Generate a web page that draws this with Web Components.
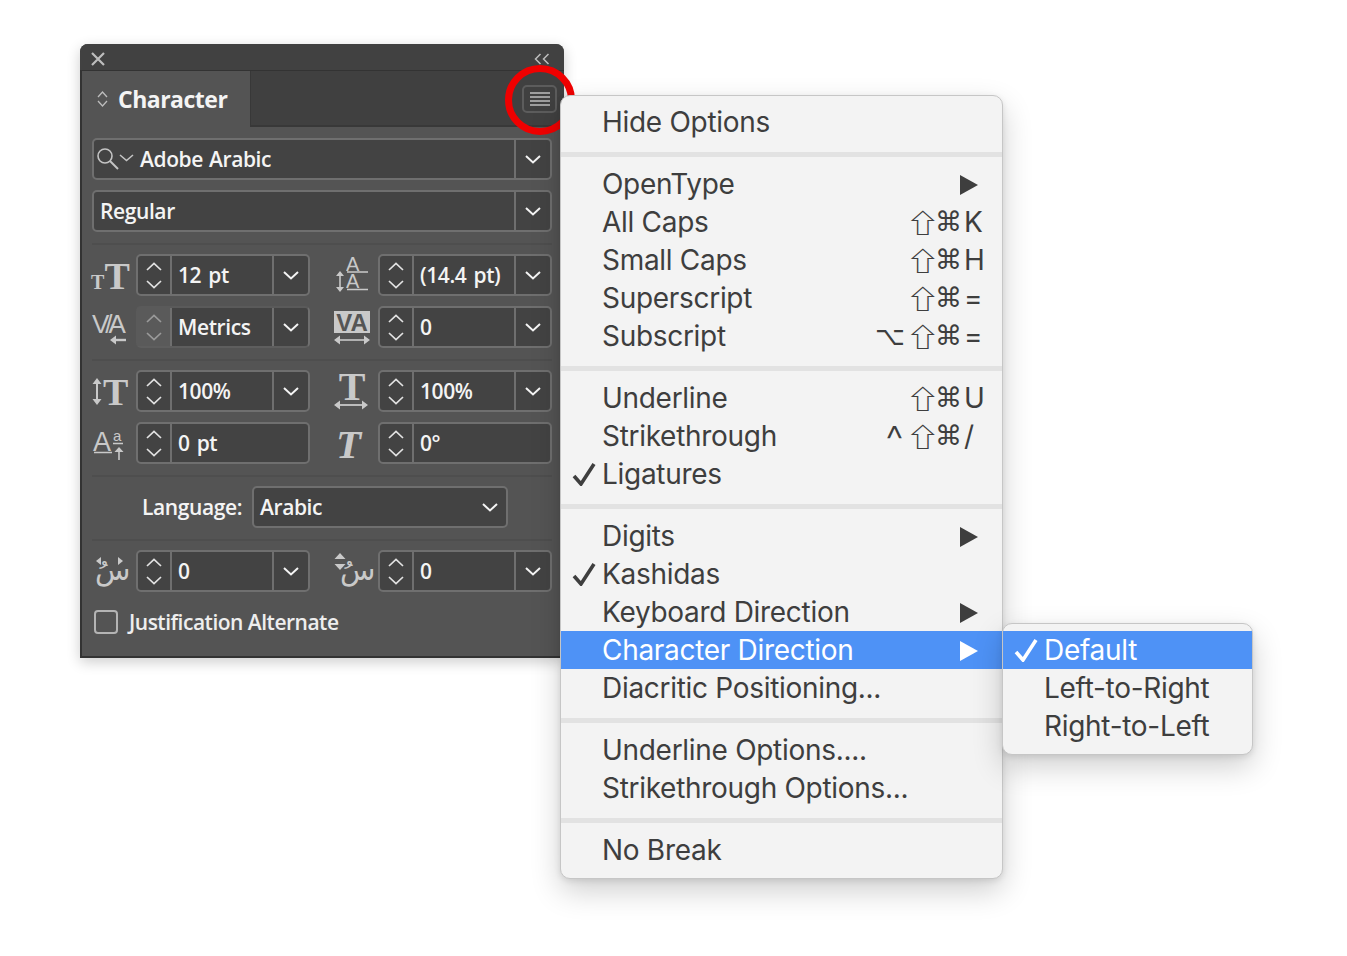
<!DOCTYPE html>
<html lang="en">
<head>
<meta charset="utf-8">
<title>Character panel</title>
<style>
  html, body { margin: 0; height: 956px; overflow: hidden; background: #fff; }
</style>
</head>
<body>
<app-canvas>
  <character-panel></character-panel>
  <mark-ring></mark-ring>
  <menu-list style="left:560px;top:95px;width:443px">
    <menu-row label="Hide Options"></menu-row>
    <menu-sep></menu-sep>
    <menu-row label="OpenType" arrow></menu-row>
    <menu-row label="All Caps" keys="⇧ ⌘ K"></menu-row>
    <menu-row label="Small Caps" keys="⇧ ⌘ H"></menu-row>
    <menu-row label="Superscript" keys="⇧ ⌘ ="></menu-row>
    <menu-row label="Subscript" keys="⌥ ⇧ ⌘ ="></menu-row>
    <menu-sep></menu-sep>
    <menu-row label="Underline" keys="⇧ ⌘ U"></menu-row>
    <menu-row label="Strikethrough" keys="^ ⇧ ⌘ /"></menu-row>
    <menu-row label="Ligatures" checked></menu-row>
    <menu-sep></menu-sep>
    <menu-row label="Digits" arrow></menu-row>
    <menu-row label="Kashidas" checked></menu-row>
    <menu-row label="Keyboard Direction" arrow></menu-row>
    <menu-row label="Character Direction" arrow active></menu-row>
    <menu-row label="Diacritic Positioning..."></menu-row>
    <menu-sep></menu-sep>
    <menu-row label="Underline Options...."></menu-row>
    <menu-row label="Strikethrough Options..."></menu-row>
    <menu-sep></menu-sep>
    <menu-row label="No Break"></menu-row>
  </menu-list>
  <menu-list style="left:1002px;top:623px;width:251px">
    <menu-row label="Default" checked active></menu-row>
    <menu-row label="Left-to-Right"></menu-row>
    <menu-row label="Right-to-Left"></menu-row>
  </menu-list>
</app-canvas>

<script>
const CHEVRON = (w, h, sw) => /* html */`
  <svg width="${w}" height="${h}" viewBox="0 0 ${w} ${h}" fill="none" stroke="currentColor" stroke-width="${sw}">
    <path d="M1 1 L${w / 2} ${h - 1.5} L${w - 1} 1"/>
  </svg>`;

const serif = `font-family="Liberation Serif" font-weight="700"`;
const sans = `font-family="Liberation Sans"`;
const arabic = `font-family="DejaVu Sans"`;

// every icon is drawn in a 44x42 box, the same box as the control row
const ICONS = {
  size: `<text y="35" ${serif}><tspan x="-1" font-size="20">T</tspan><tspan x="12.4" font-size="38">T</tspan></text>`,
  kern: `<text x="0" y="27" font-size="26" letter-spacing="-4" ${sans}>V/A</text>
    <path d="M34 34 H21" stroke="#c9c9c9" stroke-width="2.4"/><path d="M18 34 l6 -4.5 v9z"/>`,
  leading: `<foreignObject x="12" y="2" width="26" height="40">
      <div style="font:20px/17px 'Liberation Sans';color:#c9c9c9;white-space:pre">A&#10;A</div>
    </foreignObject>
    <path d="M13 18 H34 M13 35.5 H34 M6 21 V34" stroke="#c9c9c9" stroke-width="1.6" fill="none"/>
    <path d="M6 17 l-4 5 h8z M6 38 l-4 -5 h8z"/>`,
  track: `<rect x="0" y="5" width="36" height="22"/>
    <text x="18" y="25" font-size="24" text-anchor="middle" fill="#555" font-weight="700" ${sans}>VA</text>
    <path d="M4 34 H32" stroke="#c9c9c9" stroke-width="1.6"/><path d="M0 34 l6 -4.5 v9z M36 34 l-6 -4.5 v9z"/>`,
  vscale: `<text x="11" y="35" font-size="38" ${serif}>T</text>
    <path d="M5 12 V31" stroke="#c9c9c9" stroke-width="2"/><path d="M5 8 l-4.5 6 h9z M5 35 l-4.5 -6 h9z"/>`,
  hscale: `<text x="18" y="30" font-size="40" text-anchor="middle" ${serif}>T</text>
    <path d="M4 35 H30" stroke="#c9c9c9" stroke-width="1.8"/><path d="M0 35 l6 -4.5 v9z M34 35 l-6 -4.5 v9z"/>`,
  baseline: `<text ${sans}><tspan x="1" y="29" font-size="27">A</tspan><tspan x="21" y="19" font-size="15">a</tspan></text>
    <path d="M2 30.5 H20 M21 21.5 H31 M27 29 V38" stroke="#c9c9c9" stroke-width="1.6" fill="none"/>
    <path d="M27 25 l-4.5 5 h9z"/>`,
  skew: `<text x="2" y="36" font-size="41" font-style="italic" ${serif}>T</text>`,
  kashidaH: `<text x="3" y="30" font-size="29" ${arabic}>سُ</text>
    <path d="M4 11 l5 -4 v8z M31 11 l-5 -4 v8z"/>`,
  kashidaV: `<text x="6" y="30" font-size="29" ${arabic}>سُ</text>
    <path d="M6 3 l-5.5 6 h11z M6 20 l-5.5 -6 h11z"/>`,
};

class AppCanvas extends HTMLElement {
  constructor() {
    super();
    this.attachShadow({ mode: "open" });
    this.shadowRoot.innerHTML = /* html */`
      <style>
        :host { display: block; position: relative; width: 1347px; height: 956px; overflow: hidden; }
      </style>
      <slot></slot>`;
  }
}

class DropSelect extends HTMLElement {
  constructor() {
    super();
    this.attachShadow({ mode: "open" });
  }

  connectedCallback() {
    const search = this.hasAttribute("search");
    const plain = this.hasAttribute("plain");
    this.shadowRoot.innerHTML = /* html */`
      <style>
        :host {
          display: flex;
          box-sizing: border-box;
          height: 42px;
          background: #434343;
          border: 2px solid #6f6f6f;
          border-radius: 5px;
          color: #f4f4f4;
          font: 600 21px/38px "Open Sans", sans-serif;
          letter-spacing: -0.4px;
          word-spacing: 1px;
        }
        .search { display: flex; align-items: center; padding-left: 2px; color: #c4c4c4; }
        .text { flex: 1; padding-left: 6px; white-space: nowrap; }
        .drop {
          width: 36px;
          display: flex;
          align-items: center;
          justify-content: center;
          box-sizing: border-box;
          border-left: 2px solid #6f6f6f;
        }
        .plain { border-left: 0; width: 32px; }
      </style>
      ${search ? /* html */`<div class="search">
        <svg width="38" height="30" viewBox="0 0 38 30" fill="none" stroke="currentColor" stroke-width="1.6">
          <circle cx="9" cy="12" r="7"/><path d="M14 17 L22 25" stroke-width="2"/><path d="M24 11 L30.5 16.5 L37 11"/>
        </svg></div>` : ""}
      <div class="text">${this.getAttribute("value")}</div>
      <div class="drop ${plain ? "plain" : ""}">${CHEVRON(16, 9, 2)}</div>`;
  }
}

class SpinCombo extends HTMLElement {
  constructor() {
    super();
    this.attachShadow({ mode: "open" });
  }

  connectedCallback() {
    const noDrop = this.hasAttribute("nodrop");
    const off = this.hasAttribute("off");
    this.shadowRoot.innerHTML = /* html */`
      <style>
        :host {
          display: grid;
          grid-template-columns: 34px 1fr ${noDrop ? "" : "36px"};
          box-sizing: border-box;
          height: 42px;
          background: #434343;
          border: 2px solid #6f6f6f;
          border-radius: 5px;
          color: #f4f4f4;
          font: 600 21px/38px "Open Sans", sans-serif;
          letter-spacing: -0.4px;
          word-spacing: 2px;
        }
        :host([off]) { border-left-color: #5a5a5a; border-top-color: #5a5a5a; border-bottom-color: #5e5e5e; }
        .step {
          display: flex;
          flex-direction: column;
          align-items: center;
          justify-content: space-between;
          padding: 6px 0 5px;
          border-right: 2px solid #6f6f6f;
          color: #e2e2e2;
        }
        .step svg:first-child { transform: scaleY(-1); }
        .off { background: #5a5a5a; color: #9a9a9a; }
        .value { padding-left: 6px; white-space: nowrap; }
        .drop {
          display: flex;
          align-items: center;
          justify-content: center;
          border-left: 2px solid #6f6f6f;
        }
      </style>
      <div class="step ${off ? "off" : ""}">${CHEVRON(16, 9, 1.7)}${CHEVRON(16, 9, 1.7)}</div>
      <div class="value">${this.getAttribute("value")}</div>
      ${noDrop ? "" : `<div class="drop">${CHEVRON(16, 9, 2)}</div>`}`;
  }
}

class FieldIcon extends HTMLElement {
  constructor() {
    super();
    this.attachShadow({ mode: "open" });
  }

  connectedCallback() {
    this.shadowRoot.innerHTML = /* html */`
      <style>
        :host { display: block; width: 44px; height: 42px; }
        svg { display: block; overflow: visible; fill: #c9c9c9; }
      </style>
      <svg width="44" height="42" viewBox="0 0 44 42">${ICONS[this.getAttribute("name")]}</svg>`;
  }
}

class CharacterPanel extends HTMLElement {
  constructor() {
    super();
    this.attachShadow({ mode: "open" });
  }

  static get styles() {
    return /* css */`
      :host {
        position: absolute;
        left: 80px;
        top: 44px;
        width: 484px;
        height: 614px;
        display: flex;
        flex-direction: column;
        box-sizing: border-box;
        border-radius: 8px 8px 0 0;
        border: solid #333;
        border-width: 0 0 2px 2px;
        background: #545454;
        font-family: "Open Sans", sans-serif;
        color: #f4f4f4;
        box-shadow: 0 4px 14px #0003;
      }

      .title {
        height: 27px;
        flex: none;
        box-sizing: border-box;
        margin-left: -2px;
        display: flex;
        align-items: center;
        justify-content: space-between;
        padding: 4px 14px 0 11px;
        background: #414141;
        border-radius: 8px 8px 0 0;
        border-bottom: 1px solid #333;
        color: #bdbdbd;
      }

      .tabs {
        height: 54px;
        flex: none;
        display: flex;
        background: #404040;
        border-bottom: 2px solid #383838;
      }

      .tab {
        width: 169px;
        margin-bottom: -2px;
        display: flex;
        align-items: center;
        gap: 10px;
        padding-left: 15px;
        box-sizing: border-box;
        background: #545454;
        border-right: 1px solid #383838;
        font-size: 23px;
        font-weight: 700;
        letter-spacing: -0.5px;
      }

      .tab svg { color: #bdbdbd; }

      .tabs .burger {
        margin: 14px 7px 0 auto;
        width: 35px;
        height: 28px;
        box-sizing: border-box;
        border: 2px solid #5c5c5c;
        border-radius: 5px;
        display: flex;
        align-items: center;
        justify-content: center;
      }

      .body {
        flex: 1;
        display: flex;
        flex-direction: column;
        padding: 11px 12px 0 10px;
      }

      .stack { display: flex; flex-direction: column; gap: 10px; }

      .grid {
        display: grid;
        grid-template-columns: 44px 174px 68px 174px;
        row-gap: 10px;
      }

      .grid > :nth-child(4n + 3) { margin-left: 24px; }

      hr {
        width: 100%;
        height: 2px;
        margin: 11px 0 9px;
        border: 0;
        background: #4e4e4e;
        flex: none;
      }

      .language {
        display: grid;
        grid-template-columns: 150px 256px;
        column-gap: 10px;
        align-items: center;
        font-size: 21px;
        font-weight: 600;
      }

      .language span { text-align: right; letter-spacing: -0.4px; }

      .check {
        display: flex;
        align-items: center;
        gap: 11px;
        margin: 16px 0 0 2px;
        font-size: 21px;
        font-weight: 600;
        letter-spacing: -0.5px;
        color: #eee;
      }

      .box {
        width: 24px;
        height: 24px;
        box-sizing: border-box;
        border: 2px solid #b4b4b4;
        border-radius: 4px;
      }
    `;
  }

  connectedCallback() {
    this.shadowRoot.innerHTML = /* html */`
      <style>${CharacterPanel.styles}</style>
      <div class="title">
        <svg width="14" height="14" viewBox="0 0 14 14" stroke="currentColor" stroke-width="2.2"><path d="M1 1 L13 13 M13 1 L1 13"/></svg>
        <svg width="16" height="12" viewBox="0 0 16 12" fill="none" stroke="currentColor" stroke-width="1.5"><path d="M6.5 1 L1.5 6 L6.5 11 M14.5 1 L9.5 6 L14.5 11"/></svg>
      </div>
      <div class="tabs">
        <div class="tab">
          <svg width="11" height="16" viewBox="0 0 11 16" fill="none" stroke="currentColor" stroke-width="1.3"><path d="M1 6 L5.5 1 L10 6 M1 10 L5.5 15 L10 10"/></svg>
          Character
        </div>
        <div class="burger">
          <svg width="20" height="14" viewBox="0 0 20 14" stroke="#bdbdbd" stroke-width="1.5"><path d="M0 1 H20 M0 5 H20 M0 9 H20 M0 13 H20"/></svg>
        </div>
      </div>
      <div class="body">
        <div class="stack">
          <drop-select search value="Adobe Arabic"></drop-select>
          <drop-select value="Regular"></drop-select>
        </div>
        <hr>
        <div class="grid">
          <field-icon name="size"></field-icon><spin-combo value="12 pt"></spin-combo>
          <field-icon name="leading"></field-icon><spin-combo value="(14.4 pt)"></spin-combo>
          <field-icon name="kern"></field-icon><spin-combo off value="Metrics"></spin-combo>
          <field-icon name="track"></field-icon><spin-combo value="0"></spin-combo>
        </div>
        <hr>
        <div class="grid">
          <field-icon name="vscale"></field-icon><spin-combo value="100%"></spin-combo>
          <field-icon name="hscale"></field-icon><spin-combo value="100%"></spin-combo>
          <field-icon name="baseline"></field-icon><spin-combo nodrop value="0 pt"></spin-combo>
          <field-icon name="skew"></field-icon><spin-combo nodrop value="0°"></spin-combo>
        </div>
        <hr>
        <div class="language">
          <span>Language:</span>
          <drop-select plain value="Arabic"></drop-select>
        </div>
        <hr>
        <div class="grid">
          <field-icon name="kashidaH"></field-icon><spin-combo value="0"></spin-combo>
          <field-icon name="kashidaV"></field-icon><spin-combo value="0"></spin-combo>
        </div>
        <label class="check"><span class="box"></span>Justification Alternate</label>
      </div>`;
  }
}

class MarkRing extends HTMLElement {
  constructor() {
    super();
    this.attachShadow({ mode: "open" });
    this.shadowRoot.innerHTML = /* html */`
      <style>
        :host {
          position: absolute;
          left: 505px;
          top: 65px;
          width: 70px;
          height: 70px;
          box-sizing: border-box;
          border: 7px solid #f00000;
          border-radius: 50%;
        }
      </style>`;
  }
}

class MenuList extends HTMLElement {
  constructor() {
    super();
    this.attachShadow({ mode: "open" });
    this.shadowRoot.innerHTML = /* html */`
      <style>
        :host {
          position: absolute;
          display: block;
          box-sizing: border-box;
          padding: 7px 0 9px;
          background: #f3f3f3;
          border: 1px solid #c6c6c6;
          border-radius: 10px;
          box-shadow: 0 12px 30px #00000030, 0 2px 6px #0000001a;
        }
      </style>
      <slot></slot>`;
  }
}

class MenuSep extends HTMLElement {
  constructor() {
    super();
    this.attachShadow({ mode: "open" });
    this.shadowRoot.innerHTML = /* html */`
      <style>
        :host { display: block; height: 5px; margin: 11px 0 8px; background: #e2e2e2; }
      </style>`;
  }
}

class MenuRow extends HTMLElement {
  constructor() {
    super();
    this.attachShadow({ mode: "open" });
  }

  static modClass(key) {
    if (key === "⇧") return "shift";
    if (key === "⌥") return "option";
    if (key === "^") return "caret";
    return "";
  }

  connectedCallback() {
    const keys = (this.getAttribute("keys") || "").split(" ").filter(Boolean);
    const last = keys.pop();
    const mods = keys.map((k) => `<span class="mod ${MenuRow.modClass(k)}">${k}</span>`).join("");
    this.shadowRoot.innerHTML = /* html */`
      <style>
        :host {
          display: flex;
          align-items: center;
          position: relative;
          height: 38px;
          padding-left: 41px;
          color: #3e3e3e;
          font: 28px/38px Inter, sans-serif;
          letter-spacing: -0.3px;
          white-space: nowrap;
        }
        :host([active]) { background: #4e92f6; color: #fff; }
        .tick { position: absolute; left: 11px; top: 7px; }
        .keys { margin-left: auto; display: flex; align-items: center; }
        .mod { font: 27px/38px "DejaVu Sans", sans-serif; width: 27px; text-align: center; letter-spacing: 0; }
        /* the glyph is narrow: stretch it, with a tight advance so its box stays in its slot */
        .shift {
          font: 26px/38px "Noto Sans CJK JP", "DejaVu Sans", sans-serif;
          letter-spacing: -8px;
          transform: translateX(-4px) scaleX(1.35);
        }
        .option { font-size: 26px; transform: translateX(-6px); }
        .caret { font: 300 40px/38px Inter, sans-serif; transform: translateY(4px); }
        .key { width: 38px; letter-spacing: 0; margin-left: 2px; }
        .arrow { margin-left: auto; margin-right: 24px; display: block; position: relative; top: 1px; }
      </style>
      ${this.hasAttribute("checked") ? /* html */`<svg class="tick" width="24" height="24" viewBox="0 0 24 24"
        fill="none" stroke="currentColor" stroke-width="3.6"><path d="M2 14 L9 22 L22 2"/></svg>` : ""}
      <span>${this.getAttribute("label")}</span>
      ${last ? `<span class="keys">${mods}<span class="key">${last}</span></span>` : ""}
      ${this.hasAttribute("arrow") ? /* html */`<svg class="arrow" width="18" height="20" viewBox="0 0 18 20"
        fill="currentColor"><path d="M0 0 L18 10 L0 20z"/></svg>` : ""}`;
  }
}

customElements.define("app-canvas", AppCanvas);
customElements.define("drop-select", DropSelect);
customElements.define("spin-combo", SpinCombo);
customElements.define("field-icon", FieldIcon);
customElements.define("character-panel", CharacterPanel);
customElements.define("mark-ring", MarkRing);
customElements.define("menu-list", MenuList);
customElements.define("menu-sep", MenuSep);
customElements.define("menu-row", MenuRow);
</script>
</body>
</html>
